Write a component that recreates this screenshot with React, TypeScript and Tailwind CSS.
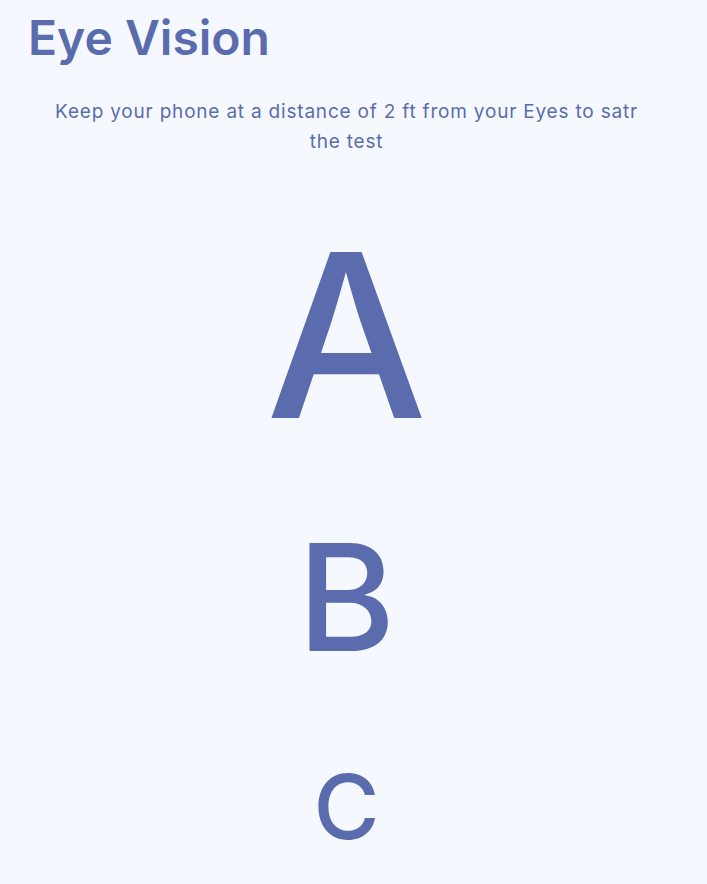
export default function App() {
  return (
    <div className="min-h-screen bg-[#f5f9ff] pr-[14px] text-[#5a6cae] font-['Inter',sans-serif]">
      <h1 className="pl-[28px] pt-[14px] text-[48px] font-semibold leading-[48px]">
        Eye Vision
      </h1>
      <p className="mx-auto mt-[35px] max-w-[600px] text-center text-[19px] leading-[30px] tracking-[0.8px]">
        Keep your phone at a distance of 2 ft from your Eyes to satr the test
      </p>
      <div className="flex flex-col items-center">
        <span className="mt-[64px] text-[228px] font-medium leading-none">A</span>
        <span className="mt-[74px] text-[149px] font-medium leading-none">B</span>
        <span className="mt-[90px] text-[90px] font-medium leading-none">C</span>
      </div>
    </div>
  );
}
